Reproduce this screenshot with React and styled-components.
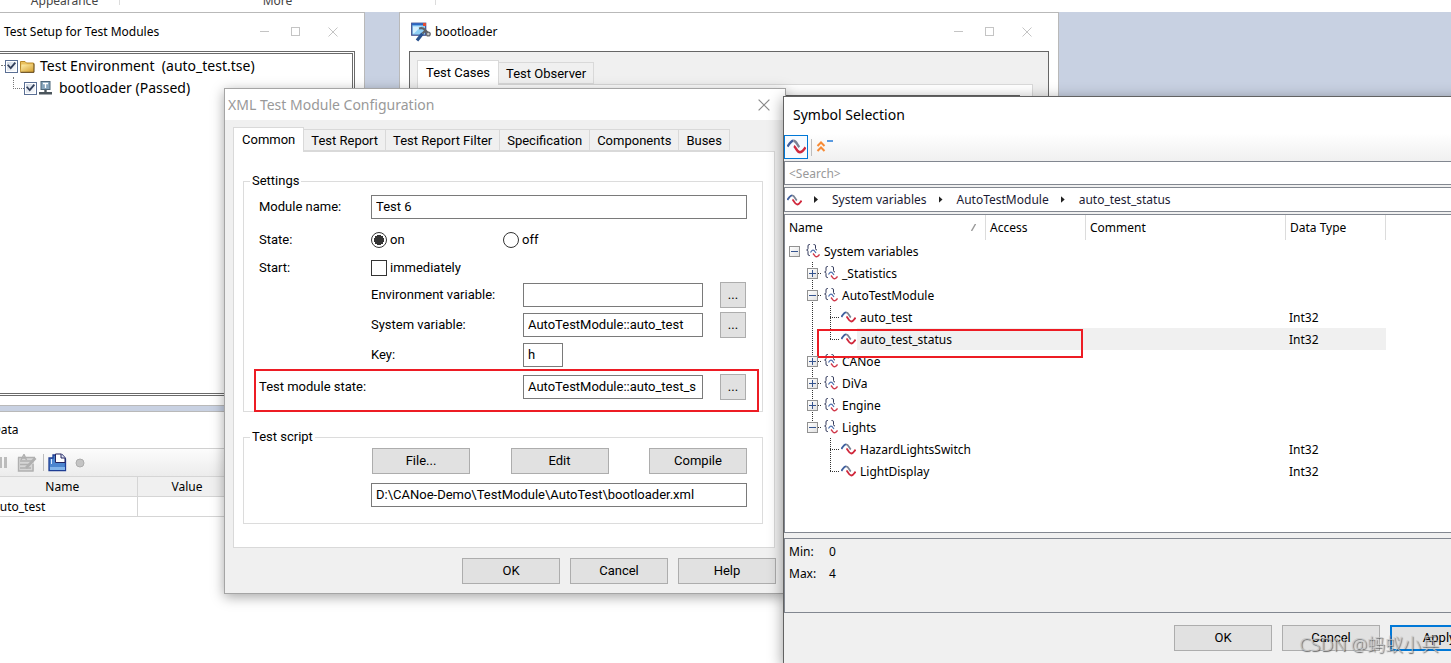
import React from 'react';
import styled, { createGlobalStyle, css } from 'styled-components';

const uiFont = '"Noto Sans", "Noto Sans CJK SC", sans-serif';
const formFont = 'Roboto, "Liberation Sans", sans-serif';

const GlobalStyle = createGlobalStyle`
  *, *::before, *::after {
    box-sizing: border-box;
  }
  body {
    margin: 0;
    color: #000;
    font: 12px/18px ${uiFont};
  }
  button, input {
    margin: 0;
    padding: 0;
    color: inherit;
    font: inherit;
    border-radius: 0;
  }
  svg {
    display: block;
    flex: none;
  }
`;

const Desktop = styled.main`
  position: relative;
  height: 100vh;
  overflow: hidden;
  background: #c8d1e2;
`;

/* ribbon */

const Ribbon = styled.header`
  display: flex;
  height: 12px;
  padding-left: 10px;
  overflow: hidden;
  background: #fff;
  color: #444;
`;

const RibbonGroup = styled.div`
  display: flex;
  justify-content: center;
  align-items: flex-end;
  width: ${props => props.$width}px;
  height: 5px;
  border-right: 1px solid #dcdcdc;
`;

const RibbonLabel = styled.span`
  margin-bottom: -5px;
`;

/* windows */

const Window = styled.section`
  position: absolute;
  display: flex;
  flex-direction: column;
  background: #fff;
  border: 1px solid #b9b9b9;
`;

const SetupWindow = styled(Window)`
  top: 12px;
  left: -4px;
  width: 369px;
  height: 394px;
`;

const ModuleWindow = styled(Window)`
  top: 12px;
  left: 399px;
  width: 660px;
  height: 394px;
`;

const DataWindow = styled(Window)`
  top: 411px;
  left: -13px;
  right: -13px;
  bottom: -4px;
`;

const ConfigDialog = styled(Window)`
  top: 88px;
  left: 224px;
  width: 562px;
  background: #f0f0f0;
  border-color: #a5a5a5;
  box-shadow: 0 3px 12px rgba(0, 0, 0, 0.35);
  font-family: ${formFont};
  font-size: 13px;
`;

const SymbolDialog = styled(Window)`
  top: 96px;
  left: 783px;
  right: -50px;
  bottom: -2px;
  background: #f0f0f0;
  border-color: #626262;
  box-shadow: 0 3px 14px rgba(0, 0, 0, 0.4);
`;

const TitleBar = styled.div`
  display: flex;
  align-items: center;
  flex: none;
  gap: 4px;
  height: ${props => props.$height || 38}px;
  padding: 0 ${props => props.$right || 10}px 0 ${props => props.$left || 7}px;
  background: #fff;
`;

const WindowTitle = styled.h2`
  flex: 1;
  margin: 0;
  font-weight: 400;
  font-size: ${props => (props.$big ? 14 : 12)}px;
  line-height: 18px;
  font-family: ${uiFont};
  color: ${props => (props.$dim ? '#999' : '#000')};
`;

const Controls = styled.div`
  display: flex;
`;

const ControlButton = styled.button`
  display: flex;
  align-items: center;
  justify-content: center;
  width: ${props => (props.$close ? 43 : 31)}px;
  height: 28px;
  border: 0;
  background: none;
  color: ${props => (props.$dark ? '#888' : '#c4c4c4')};
`;

/* test setup window */

const SetupBody = styled.div`
  flex: 1;
  margin: 0 9px 9px 0;
  padding-top: 1px;
  border: 3px double #6a6a6a;
`;

const SetupRow = styled.div`
  display: flex;
  align-items: center;
  height: 22px;
  padding-left: ${props => (props.$child ? 13 : 1)}px;
  font-size: 14px;
  white-space: pre;
`;

const Dots = styled.span`
  flex: none;
  align-self: flex-start;
  width: ${props => props.$width}px;
  height: ${props => (props.$corner ? 12 : 11)}px;
  border-bottom: 1px dotted #777;
  border-left: ${props => (props.$corner ? '1px dotted #777' : '0')};
`;

const SetupCheck = styled.label`
  display: flex;
  align-items: center;
`;

const TickBox = styled.input`
  appearance: none;
  display: grid;
  place-items: center;
  flex: none;
  width: 13px;
  height: 13px;
  border: 1px solid #5a6f94;
  background: linear-gradient(135deg, #ccd5e2, #fff);
  box-shadow: inset 0 0 0 1px #fff;
  &:checked::before {
    content: '';
    width: 9px;
    height: 8px;
    background: #33405c;
    clip-path: polygon(0 40%, 15% 28%, 40% 60%, 85% 0, 100% 15%, 42% 95%);
  }
`;

const SetupIcon = styled.span`
  width: 20px;
  margin-left: 2px;
`;

/* tabs */

const Tabs = styled.div`
  display: flex;
  align-items: flex-end;
  height: 24px;
  font-family: ${formFont};
  font-size: 13px;
`;

const Tab = styled.button`
  flex: none;
  height: 22px;
  margin-left: -1px;
  padding: 2px 7px 0;
  border: 1px solid #d9d9d9;
  background: #f0f0f0;
  ${props =>
    props.$active &&
    css`
      position: relative;
      height: 25px;
      margin-left: 0;
      margin-bottom: -1px;
      padding: 0 8px 1px;
      border-bottom: 0;
      background: #fff;
    `}
`;

const ModuleBody = styled.div`
  flex: 1;
  margin: 0 9px 9px;
  padding: 8px 15px 8px 7px;
  border: 1px solid #666;
  background: #f0f0f0;
`;

const ModulePage = styled.div`
  height: calc(100% - 24px);
  padding: 10px 12px;
  border: 1px solid #d9d9d9;
  background: #fff;
`;

const ModuleList = styled.div`
  height: 100%;
  border: 2px solid #666;
`;

/* data window */

const DataToolbar = styled.div`
  display: flex;
  align-items: center;
  gap: 3px;
  height: 28px;
  padding-left: 5px;
  border-top: 1px solid #d0d0d0;
  background: linear-gradient(#fcfcfc, #ececec);
`;

const IconButton = styled.button`
  display: flex;
  align-items: center;
  justify-content: center;
  width: ${props => props.$width || 20}px;
  height: 24px;
  border: ${props => (props.$on ? '1px solid #0078d7' : '0')};
  background: ${props => (props.$on ? '#f7fbff' : 'none')};
`;

const Separator = styled.span`
  width: 1px;
  height: 17px;
  background: #bdbdbd;
`;

const DataTable = styled.table`
  width: 349px;
  table-layout: fixed;
  border-collapse: collapse;
  th,
  td {
    height: 20px;
    padding: 0 0 0 5px;
    border-right: 1px solid #d5d5d5;
    border-bottom: 1px solid #d5d5d5;
    font-weight: 400;
    text-align: left;
  }
  th {
    padding: 0;
    border-top: 1px solid #d5d5d5;
    background: #f0f0f0;
    text-align: center;
  }
`;

/* configuration dialog */

const ConfigBody = styled.div`
  padding: 7px 10px 0 8px;
`;

const ConfigPage = styled.div`
  padding: 20px 11px 23px 9px;
  border: 1px solid #d9d9d9;
  background: #fff;
`;

const Group = styled.fieldset`
  min-width: 0;
  margin: 0;
  padding: 0 15px 9px;
  border: 1px solid #dcdcdc;
  & + & {
    margin-top: 16px;
    padding-bottom: 16px;
  }
`;

const Legend = styled.legend`
  margin-left: -9px;
  padding: 0 2px;
  line-height: 18px;
`;

const FormRow = styled.div`
  position: relative;
  display: grid;
  grid-template-columns: 112px 152px 180px 26px;
  align-items: center;
  height: ${props => props.$height || 30}px;
  margin-top: ${props => (props.$marked ? 2 : 0)}px;
`;

const FieldLabel = styled.label`
  grid-column: ${props => props.$column || 1};
  white-space: nowrap;
`;

const TextBox = styled.input`
  grid-column: ${props => props.$column || '3'};
  width: ${props => (props.$short ? '40px' : '100%')};
  height: 24px;
  padding: 0 4px 2px;
  border: 1px solid #7a7a7a;
  background: #fff;
  outline: 0;
`;

const Choices = styled.div`
  display: grid;
  grid-template-columns: 132px 1fr;
  grid-column: 2 / 5;
`;

const Choice = styled.label`
  display: flex;
  align-items: center;
  gap: 3px;
`;

const Radio = styled.input`
  appearance: none;
  width: 16px;
  height: 16px;
  border: 1px solid #333;
  border-radius: 50%;
  background: #fff;
  &:checked {
    background: radial-gradient(circle, #333 5px, #fff 5px);
  }
`;

const CheckBox = styled.input`
  appearance: none;
  width: 16px;
  height: 16px;
  border: 1px solid #333;
  background: #fff;
`;

const Button = styled.button`
  flex: none;
  width: 98px;
  height: 26px;
  border: 1px solid #adadad;
  background: #e1e1e1;
  font-family: ${formFont};
  font-size: 13px;
  ${props =>
    props.$primary &&
    css`
      border: 2px solid #0078d7;
    `}
`;

const MoreButton = styled(Button)`
  grid-column: 4;
  width: 26px;
  margin-left: 17px;
`;

const ScriptButtons = styled.div`
  display: flex;
  justify-content: space-between;
  margin: 2px 0 9px 113px;
`;

const ScriptPath = styled.div`
  margin-left: 112px;
`;

const Footer = styled.div`
  display: flex;
  justify-content: flex-end;
  gap: 10px;
  padding: 10px 9px 9px;
`;

const Marker = styled.span`
  position: absolute;
  border: 2px solid #ed1c24;
  pointer-events: none;
`;

const StateMarker = styled(Marker)`
  inset: -3px -12px -10px -5px;
`;

const RowMarker = styled(Marker)`
  top: 1px;
  left: 32px;
  width: 266px;
  height: 29px;
  z-index: 1;
`;

/* symbol dialog */

const SymbolToolbar = styled.div`
  display: flex;
  align-items: center;
  gap: 3px;
  flex: none;
  height: 28px;
  background: linear-gradient(#fff, #f0f0f0);
`;

const SearchBox = styled.input`
  flex: none;
  height: 24px;
  padding: 0 4px;
  border: 1px solid #828790;
  background: #fff;
  outline: 0;
  &::placeholder {
    color: #999;
    opacity: 1;
  }
`;

const Breadcrumb = styled.nav`
  display: flex;
  align-items: center;
  flex: none;
  height: 25px;
  margin: 2px 0;
  padding-left: 2px;
  border: 1px solid #828790;
  background: #fff;
  color: #1a1a33;
`;

const Crumb = styled.a`
  color: inherit;
  text-decoration: none;
`;

const Arrow = styled.span`
  width: 4px;
  height: 7px;
  margin: 0 14px 0 12px;
  background: #222;
  clip-path: polygon(0 0, 100% 50%, 0 100%);
`;

const TreePane = styled.div`
  flex: 1;
  min-height: 0;
  overflow: hidden;
  border: 1px solid #828790;
  background: #fff;
`;

const TreeTable = styled.table`
  width: 601px;
  table-layout: fixed;
  border-collapse: separate;
  border-spacing: 0;
  th {
    height: 25px;
    padding: 0 4px;
    border-right: 1px solid #dcdcdc;
    font-weight: 400;
    text-align: left;
  }
  td {
    height: 22px;
    padding: 2px 3px 0;
  }
`;

const NameHeader = styled.div`
  display: flex;
  align-items: center;
  justify-content: space-between;
  padding-right: 5px;
`;

const TreeRow = styled.tr`
  && td {
    background: ${props => (props.$selected ? '#f0f0f0' : 'none')};
  }
  && td:first-child {
    padding: 0;
    background: none;
  }
`;

const TreeCell = styled.div`
  position: relative;
  display: flex;
  align-items: center;
  height: 22px;
`;

const Slot = styled.span`
  position: relative;
  display: flex;
  align-items: center;
  justify-content: center;
  flex: none;
  width: 18px;
  height: 22px;
  &::before {
    content: '';
    position: absolute;
    top: 0;
    left: 9px;
    width: 1px;
    height: ${props => (props.$line === 'full' ? 22 : 12)}px;
    background: ${props =>
      props.$line ? 'repeating-linear-gradient(#333 0 1px, transparent 1px 2px)' : 'none'};
  }
  &::after {
    content: '';
    position: absolute;
    top: 11px;
    left: 9px;
    width: 9px;
    height: 1px;
    background: ${props =>
      props.$branch
        ? 'repeating-linear-gradient(90deg, #333 0 1px, transparent 1px 2px)'
        : 'none'};
  }
`;

const Expander = styled.button`
  position: relative;
  z-index: 1;
  display: flex;
  align-items: center;
  justify-content: center;
  width: 11px;
  height: 11px;
  border: 1px solid #919191;
  background: linear-gradient(135deg, #fff, #e2e2e2);
`;

const SymbolIcon = styled.span`
  display: flex;
  justify-content: flex-end;
  flex: none;
  width: 17px;
`;

const SymbolLabel = styled.span`
  flex: 1;
  height: 22px;
  margin-left: 1px;
  padding-left: 3px;
  line-height: 24px;
  white-space: nowrap;
  background: ${props => (props.$selected ? '#f0f0f0' : 'none')};
`;

const Limits = styled.dl`
  display: grid;
  grid-template-columns: 40px 1fr;
  grid-auto-rows: 22px;
  flex: none;
  height: 75px;
  margin: 5px 0 0;
  padding: 2px 4px;
  border: 1px solid #828790;
  line-height: 22px;
  dd {
    margin: 0;
  }
`;

const SymbolFooter = styled(Footer)`
  padding: 12px 12px 13px;
`;

const Watermark = styled.span`
  position: absolute;
  right: 12px;
  bottom: 5px;
  color: rgba(200, 200, 200, 0.85);
  font: 300 18px/28px "Noto Sans", "Noto Sans CJK SC", sans-serif;
  text-shadow: 1px 1px 1px rgba(60, 60, 60, 0.8);
  pointer-events: none;
`;

/* icons */

const WaveIcon = ({ size = 15 }) => (
  <svg width={size} height={size * 0.8} viewBox="0 0 15 12" fill="none" strokeWidth="1.9">
    <path d="M0.4 6C2 3.5 3.2 1.4 5 1.4" stroke="#3f5f9e" />
    <path d="M5 1.4C7.6 1.4 8 5 9.8 6.4" stroke="#7a8294" />
    <path d="M5.4 5.6C7 6.2 7.6 10.5 10.2 10.5C12.4 10.5 13.2 8.4 14.6 6.6" stroke="#d0283c" />
  </svg>
);

const NamespaceIcon = () => (
  <svg width="14" height="14" viewBox="0 0 14 14" fill="none">
    <path d="M4 0.5H3.2Q2 0.5 2 2V4.5Q2 6 0.6 6Q2 6 2 7.5V10Q2 11.5 3.2 11.5H4" stroke="#333a5c" />
    <path d="M7.5 0.5H8.3Q9.5 0.5 9.5 2V4.5Q9.5 6 11 6" stroke="#333a5c" />
    <path d="M4.5 8.5Q6.5 5.2 8 6.5L10 9" stroke="#4a6cab" strokeWidth="1.2" />
    <path d="M7 9.5L9 12Q11 14 13.5 10.5" stroke="#d0384a" strokeWidth="1.3" />
  </svg>
);

const FolderIcon = () => (
  <svg width="15" height="13" viewBox="0 0 15 13">
    <defs>
      <linearGradient id="folder" x1="0" y1="0" x2="1" y2="1">
        <stop offset="0" stopColor="#fff0ae" />
        <stop offset="1" stopColor="#d29a26" />
      </linearGradient>
    </defs>
    <path d="M0.5 12V1.5H5L6.5 3H13.5V12Z" fill="#eac15c" stroke="#b98a2b" />
    <path d="M0.5 12L1.5 4.5H14.5L13.8 12Z" fill="url(#folder)" />
    <path d="M0.5 12.3H14V3.5" fill="none" stroke="#594018" />
  </svg>
);

const TestNodeIcon = () => (
  <svg width="13" height="14" viewBox="0 0 13 14">
    <rect x="2" y="0.5" width="9" height="8" fill="#86a6bd" stroke="#4d6779" />
    <path d="M4 2.5H9M6.5 2.5V7" stroke="#fff" strokeWidth="1.3" />
    <path d="M6.5 9V12M0 12.2H13" stroke="#4b555c" strokeWidth="2.4" />
  </svg>
);

const ModuleIcon = () => (
  <svg width="20" height="20" viewBox="0 0 20 20">
    <rect x="0.7" y="1.2" width="14" height="12" fill="#8fd0f6" stroke="#3f4c8c" strokeWidth="1.2" />
    <path d="M1 2.3H12" stroke="#2b67c4" strokeWidth="2" />
    <path d="M12 1H15V4H12Z" fill="#e34b32" />
    <path d="M2 4.5H10L3 11.5H2Z" fill="#d5f0ff" />
    <path d="M6 18.5L11.5 11.5" stroke="#28528f" strokeWidth="3.2" />
    <path d="M8 6.5Q12 5.5 14 8L17 11M11.5 11.5L15 8" fill="none" stroke="#5d6166" strokeWidth="2.2" />
    <circle cx="17.3" cy="12" r="1.9" fill="#c9c9c9" stroke="#66696d" strokeWidth="1.3" />
  </svg>
);

const SheetIcon = () => (
  <svg width="20" height="18" viewBox="0 0 20 18">
    <path d="M1 3H17V17H1Z" fill="#d6d6d6" />
    <g fill="none" stroke="#b0b0b0">
      <path d="M3 7H15M3 10.5H13M3 14H14" strokeWidth="1.4" />
      <path d="M1.5 3.5V17H16V10M1 3.5H18" strokeWidth="1.4" />
      <path d="M9 14L18.5 4" strokeWidth="2.6" />
      <path d="M4 6L7 0.5L9.5 6M5 4H9" strokeWidth="1.5" />
    </g>
  </svg>
);

const ExportIcon = () => (
  <svg width="19" height="19" viewBox="0 0 19 19">
    <path d="M1 5H5V2H14L17.5 6V17.5H1Z" fill="#4c86cf" stroke="#1e3d94" strokeWidth="1.3" />
    <path d="M2 14H17V17H2Z" fill="#83b5ea" />
    <path d="M3.5 6V11" stroke="#dceaff" />
    <path d="M7.5 1H13.5L17 4.5V9.5H7.5Z" fill="#fff" stroke="#24245f" />
    <path d="M13 1V5H17" fill="#dfe6f5" stroke="#24245f" />
  </svg>
);

const CollapseIcon = () => (
  <svg width="18" height="14" viewBox="0 0 18 14" fill="none">
    <path d="M1.5 6L5 2.5L8.5 6M1.5 11L5 7.5L8.5 11" stroke="#f78b36" strokeWidth="2" />
    <path d="M11 1H17" stroke="#5a9ae0" strokeWidth="2" />
  </svg>
);

const CloseIcon = ({ size = 10 }) => (
  <svg width={size} height={size} viewBox="0 0 10 10" stroke="currentColor">
    <path d="M0.5 0.5L9.5 9.5M9.5 0.5L0.5 9.5" />
  </svg>
);

const WindowControls = () => (
  <Controls>
    <ControlButton type="button" aria-label="Minimize">
      <svg width="10" height="10" stroke="currentColor">
        <path d="M0 4.5H9" />
      </svg>
    </ControlButton>
    <ControlButton type="button" aria-label="Maximize">
      <svg width="10" height="10" fill="none" stroke="currentColor">
        <rect x="0.5" y="0.5" width="8" height="8" />
      </svg>
    </ControlButton>
    <ControlButton type="button" aria-label="Close" $close>
      <CloseIcon />
    </ControlButton>
  </Controls>
);

const symbols = [
  { name: 'System variables', level: 0, open: true },
  { name: '_Statistics', level: 1 },
  { name: 'AutoTestModule', level: 1, open: true },
  { name: 'auto_test', level: 2, outer: 'full', line: 'full', type: 'Int32' },
  { name: 'auto_test_status', level: 2, outer: 'full', line: 'half', type: 'Int32', selected: true },
  { name: 'CANoe', level: 1 },
  { name: 'DiVa', level: 1 },
  { name: 'Engine', level: 1 },
  { name: 'Lights', level: 1, open: true, last: true },
  { name: 'HazardLightsSwitch', level: 2, line: 'full', type: 'Int32' },
  { name: 'LightDisplay', level: 2, line: 'half', type: 'Int32' },
];

const Toggle = ({ symbol }) => (
  <Expander type="button" aria-label={symbol.name} aria-expanded={!!symbol.open}>
    <svg width="9" height="9" stroke="#35548f">
      <path d={symbol.open ? 'M1 4.5H8' : 'M1 4.5H8M4.5 1V8'} />
    </svg>
  </Expander>
);

const SymbolRow = ({ symbol }) => (
  <TreeRow $selected={symbol.selected}>
    <td>
      <TreeCell>
        {symbol.level > 0 && <Slot />}
        {symbol.level > 1 && <Slot $line={symbol.outer} />}
        {symbol.level < 2 ? (
          <Slot
            $line={symbol.level === 1 && (symbol.last ? 'half' : 'full')}
            $branch={symbol.level === 1}
          >
            <Toggle symbol={symbol} />
          </Slot>
        ) : (
          <Slot $line={symbol.line} $branch />
        )}
        <SymbolIcon>{symbol.level < 2 ? <NamespaceIcon /> : <WaveIcon />}</SymbolIcon>
        <SymbolLabel $selected={symbol.selected}>{symbol.name}</SymbolLabel>
        {symbol.selected && <RowMarker />}
      </TreeCell>
    </td>
    <td />
    <td />
    <td>{symbol.type}</td>
  </TreeRow>
);

const TestSetup = () => (
  <SetupWindow>
    <TitleBar>
      <WindowTitle>Test Setup for Test Modules</WindowTitle>
      <WindowControls />
    </TitleBar>
    <SetupBody>
      <SetupRow>
        <Dots $width={4} />
        <SetupCheck>
          <TickBox type="checkbox" defaultChecked />
          <SetupIcon>
            <FolderIcon />
          </SetupIcon>
          {'Test Environment  (auto_test.tse)'}
        </SetupCheck>
      </SetupRow>
      <SetupRow $child>
        <Dots $width={11} $corner />
        <SetupCheck>
          <TickBox type="checkbox" defaultChecked />
          <SetupIcon>
            <TestNodeIcon />
          </SetupIcon>
          bootloader (Passed)
        </SetupCheck>
      </SetupRow>
    </SetupBody>
  </SetupWindow>
);

const ModuleView = () => (
  <ModuleWindow>
    <TitleBar $left={11}>
      <ModuleIcon />
      <WindowTitle>bootloader</WindowTitle>
      <WindowControls />
    </TitleBar>
    <ModuleBody>
      <Tabs role="tablist">
        <Tab type="button" role="tab" $active>
          Test Cases
        </Tab>
        <Tab type="button" role="tab">
          Test Observer
        </Tab>
      </Tabs>
      <ModulePage>
        <ModuleList />
      </ModulePage>
    </ModuleBody>
  </ModuleWindow>
);

const DataView = () => (
  <DataWindow>
    <TitleBar $height={36} $left={4}>
      <WindowTitle>Data</WindowTitle>
    </TitleBar>
    <DataToolbar>
      <IconButton type="button" aria-label="Pause" $width={18}>
        <svg width="9" height="11" fill="#bcbcbc">
          <path d="M1 0H4V11H1ZM6 0H9V11H6Z" />
        </svg>
      </IconButton>
      <IconButton type="button" aria-label="Edit list" $width={26}>
        <SheetIcon />
      </IconButton>
      <Separator />
      <IconButton type="button" aria-label="Export">
        <ExportIcon />
      </IconButton>
      <IconButton type="button" aria-label="Record">
        <svg width="10" height="10">
          <circle cx="5" cy="5" r="4" fill="#c4c4c4" stroke="#adadad" />
        </svg>
      </IconButton>
    </DataToolbar>
    <DataTable>
      <colgroup>
        <col width="149" />
        <col width="100" />
        <col width="100" />
      </colgroup>
      <thead>
        <tr>
          <th>Name</th>
          <th>Value</th>
          <th />
        </tr>
      </thead>
      <tbody>
        <tr>
          <td>auto_test</td>
          <td />
          <td />
        </tr>
      </tbody>
    </DataTable>
  </DataWindow>
);

const configTabs = ['Test Report', 'Test Report Filter', 'Specification', 'Components', 'Buses'];

const Configuration = () => (
  <ConfigDialog role="dialog" aria-label="XML Test Module Configuration">
    <TitleBar $height={31} $left={3} $right={6}>
      <WindowTitle $big $dim>
        XML Test Module Configuration
      </WindowTitle>
      <ControlButton type="button" aria-label="Close" $dark>
        <CloseIcon size={12} />
      </ControlButton>
    </TitleBar>
    <ConfigBody>
      <Tabs role="tablist">
        <Tab type="button" role="tab" $active>
          Common
        </Tab>
        {configTabs.map(name => (
          <Tab type="button" role="tab" key={name}>
            {name}
          </Tab>
        ))}
      </Tabs>
      <ConfigPage>
        <Group>
          <Legend>Settings</Legend>
          <FormRow $height={34}>
            <FieldLabel htmlFor="module-name">Module name:</FieldLabel>
            <TextBox id="module-name" $column="2 / 6" defaultValue="Test 6" />
          </FormRow>
          <FormRow $height={32}>
            <span>State:</span>
            <Choices>
              <Choice>
                <Radio type="radio" name="state" defaultChecked />
                on
              </Choice>
              <Choice>
                <Radio type="radio" name="state" />
                off
              </Choice>
            </Choices>
          </FormRow>
          <FormRow $height={24}>
            <span>Start:</span>
            <Choice>
              <CheckBox type="checkbox" />
              immediately
            </Choice>
          </FormRow>
          <FormRow>
            <FieldLabel htmlFor="env-var" $column={2}>
              Environment variable:
            </FieldLabel>
            <TextBox id="env-var" />
            <MoreButton type="button">...</MoreButton>
          </FormRow>
          <FormRow>
            <FieldLabel htmlFor="sys-var" $column={2}>
              System variable:
            </FieldLabel>
            <TextBox id="sys-var" defaultValue="AutoTestModule::auto_test" />
            <MoreButton type="button">...</MoreButton>
          </FormRow>
          <FormRow>
            <FieldLabel htmlFor="key" $column={2}>
              Key:
            </FieldLabel>
            <TextBox id="key" $short defaultValue="h" />
          </FormRow>
          <FormRow $marked>
            <FieldLabel htmlFor="module-state">Test module state:</FieldLabel>
            <TextBox id="module-state" defaultValue="AutoTestModule::auto_test_s" />
            <MoreButton type="button">...</MoreButton>
            <StateMarker />
          </FormRow>
        </Group>
        <Group>
          <Legend>Test script</Legend>
          <ScriptButtons>
            <Button type="button">File...</Button>
            <Button type="button">Edit</Button>
            <Button type="button">Compile</Button>
          </ScriptButtons>
          <ScriptPath>
            <TextBox
              aria-label="Test script"
              defaultValue="D:\CANoe-Demo\TestModule\AutoTest\bootloader.xml"
            />
          </ScriptPath>
        </Group>
      </ConfigPage>
    </ConfigBody>
    <Footer>
      <Button type="button">OK</Button>
      <Button type="button">Cancel</Button>
      <Button type="button">Help</Button>
    </Footer>
  </ConfigDialog>
);

const SymbolSelection = () => (
  <SymbolDialog role="dialog" aria-label="Symbol Selection">
    <TitleBar $height={36} $left={9}>
      <WindowTitle $big>Symbol Selection</WindowTitle>
    </TitleBar>
    <SymbolToolbar>
      <IconButton type="button" aria-label="Symbols" $on $width={24}>
        <WaveIcon size={19} />
      </IconButton>
      <Separator />
      <IconButton type="button" aria-label="Collapse all">
        <CollapseIcon />
      </IconButton>
    </SymbolToolbar>
    <SearchBox type="text" aria-label="Search" placeholder="<Search>" />
    <Breadcrumb>
      <WaveIcon />
      <Arrow />
      <Crumb href="#system">System variables</Crumb>
      <Arrow />
      <Crumb href="#module">AutoTestModule</Crumb>
      <Arrow />
      <Crumb href="#status">auto_test_status</Crumb>
    </Breadcrumb>
    <TreePane>
      <TreeTable>
        <colgroup>
          <col width="201" />
          <col width="100" />
          <col width="200" />
          <col width="100" />
        </colgroup>
        <thead>
          <tr>
            <th>
              <NameHeader>
                Name
                <svg width="5" height="7" stroke="#999">
                  <path d="M0.5 7L4.5 0" strokeWidth="1.4" />
                </svg>
              </NameHeader>
            </th>
            <th>Access</th>
            <th>Comment</th>
            <th>Data Type</th>
          </tr>
        </thead>
        <tbody>
          {symbols.map(symbol => (
            <SymbolRow key={symbol.name} symbol={symbol} />
          ))}
        </tbody>
      </TreeTable>
    </TreePane>
    <Limits>
      <dt>Min:</dt>
      <dd>0</dd>
      <dt>Max:</dt>
      <dd>4</dd>
    </Limits>
    <SymbolFooter>
      <Button type="button">OK</Button>
      <Button type="button">Cancel</Button>
      <Button type="button" $primary>
        Apply
      </Button>
    </SymbolFooter>
  </SymbolDialog>
);

const App = () => (
  <>
    <GlobalStyle />
    <Desktop>
      <Ribbon>
        <RibbonGroup $width={110}>
          <RibbonLabel>Appearance</RibbonLabel>
        </RibbonGroup>
        <RibbonGroup $width={316}>
          <RibbonLabel>More</RibbonLabel>
        </RibbonGroup>
      </Ribbon>
      <TestSetup />
      <ModuleView />
      <DataView />
      <Configuration />
      <SymbolSelection />
      <Watermark>CSDN @蚂蚁小兵</Watermark>
    </Desktop>
  </>
);

export default App;
